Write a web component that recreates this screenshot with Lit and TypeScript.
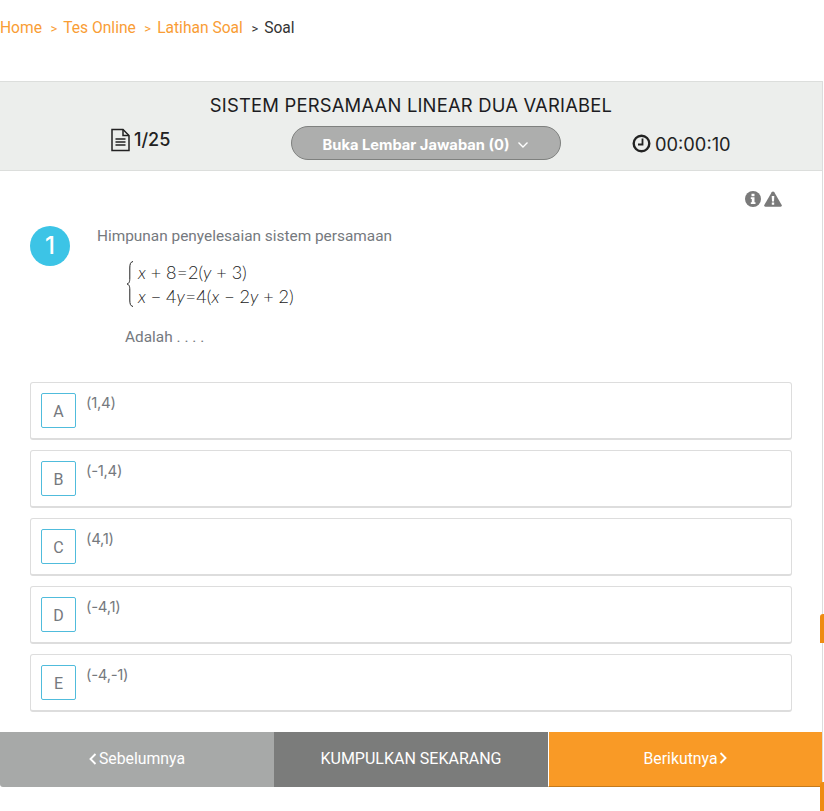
import { LitElement, html, css } from "lit";
import { customElement } from "lit/decorators.js";

const OPTIONS: [string, string][] = [
  ["A", "(1,4)"],
  ["B", "(-1,4)"],
  ["C", "(4,1)"],
  ["D", "(-4,1)"],
  ["E", "(-4,-1)"],
];

@customElement("app-root")
export class AppRoot extends LitElement {
  static styles = css`
    :host { display: block; width: 824px; height: 811px; position: relative; overflow: hidden; background: #fff; font-family: Roboto, sans-serif; }
    .crumbs { height: 81px; box-sizing: border-box; padding-top: 19px; display: flex; font-size: 15.6px; line-height: 19px; color: #f99d35; width: 822px; }
    .crumbs .sep { font-size: 13px; margin: 0 6px 0 8.5px; }
    .crumbs .cur { color: #333; }
    .page { width: 822px; border-right: 1px solid #dcdcdc; height: 730px; }
    .band { height: 90px; box-sizing: border-box; background: #eceeec; border-top: 1px solid #dcdedc; border-bottom: 1px solid #dcdedc; }
    .title { text-align: center; font-family: Inter, sans-serif; font-size: 18.4px; letter-spacing: 0.2px; line-height: 24px; padding-top: 11px; color: #1c1c22; }
    .meta { display: grid; grid-template-columns: 291px 270px 1fr; margin-top: 9px; height: 34px; }
    .count { display: flex; align-items: center; gap: 2px; padding-left: 110px; font-family: Inter, sans-serif; font-size: 18px; font-weight: 500; color: #222; height: 28px; }
    .count span { margin-top: -2px; }
    .pill { width: 270px; height: 34px; box-sizing: border-box; border: 1px solid #7f817f; border-radius: 17px; background: #adaead; color: #fff; font-family: Inter, sans-serif; font-size: 14.7px; font-weight: 700; display: flex; align-items: center; justify-content: center; gap: 8px; padding-top: 3px; }
    .time { display: flex; align-items: center; gap: 4px; padding-left: 71px; font-family: Inter, sans-serif; font-size: 18.3px; color: #222; height: 34px; }
    .time span { margin-top: 2px; }
    .tools { display: flex; justify-content: flex-end; gap: 3px; padding: 19px 40px 1px 0; height: 18px; align-items: center; }
    .q { display: grid; grid-template-columns: 40px 1fr; column-gap: 27px; padding: 11px 0 0 30px; height: 162px; }
    .num { width: 40px; height: 40px; border-radius: 50%; background: #3cc4e6; color: #fff; font-size: 24px; font-weight: 500; line-height: 40px; text-align: center; font-family: Inter, sans-serif; margin-top: 6px; }
    .qt { font-size: 15.4px; line-height: 18px; color: #75797e; padding-top: 7px; }
    .math { display: flex; margin: 15px 0 0 29px; height: 48px; font-family: Lato, sans-serif; font-size: 18px; line-height: 24px; color: #222; gap: 4px; align-items: stretch; }
    .math i { font-style: italic; font-weight: 300; }
    .math span { font-weight: 300; }
    .math .eq { margin: 0 0.5px; }
    .adalah { margin: 20px 0 0 28px; }
    .opts { display: flex; flex-direction: column; gap: 10px; margin: 0 30px; }
    .opt { height: 58px; box-sizing: border-box; border: 1px solid #dddddd; border-bottom-width: 2px; border-radius: 3px; display: flex; padding: 10px; gap: 10px; color: #75797e; }
    .key { width: 35px; height: 35px; box-sizing: border-box; border: 1px solid #50bcdc; border-radius: 2px; display: flex; align-items: center; justify-content: center; font-size: 16px; padding-top: 1px; }
    .val { font-family: Inter, sans-serif; font-size: 15px; line-height: 20px; letter-spacing: -0.3px; }
    .foot { display: grid; grid-template-columns: 274px 274px 1fr; margin-top: 20px; height: 55px; width: 822px; }
    .btn { display: flex; align-items: center; justify-content: center; gap: 2px; color: #fff; font-size: 15.8px; padding-bottom: 2px; box-sizing: border-box; }
    .prev { background: #a7a9a8; border-bottom-left-radius: 3px; }
    .mid { background: #7b7c7b; font-size: 16px; }
    .next { background: #f99a26; border-left: 1px solid #fff; border-bottom: 1px solid #c47a1c; }
    .mark { position: absolute; left: 820px; width: 4px; height: 29px; background: #ee8c12; border-radius: 3px 0 0 0; }
    .m1 { top: 614px; }
    .m2 { top: 782px; }
    svg { display: block; }
  `;

  render() {
    return html`
      <div class="crumbs">
        <span>Home</span><span class="sep">&gt;</span><span>Tes Online</span><span class="sep">&gt;</span><span>Latihan Soal</span><span class="sep cur">&gt;</span><span class="cur">Soal</span>
      </div>
      <div class="page">
        <div class="band">
          <div class="title">SISTEM PERSAMAAN LINEAR DUA VARIABEL</div>
          <div class="meta">
            <div class="count">
              <svg width="22" height="24" viewBox="0 0 22 24" fill="none" stroke="#222" stroke-width="1.5"><path d="M2 1.500h11l6 6v15H2z"/><path d="M13 1.500v6h6M5.500 11h10M5.500 14h10M5.500 17h10"/></svg>
              <span>1/25</span>
            </div>
            <div class="pill">
              <span>Buka Lembar Jawaban (0)</span>
              <svg width="12" height="8" viewBox="0 0 12 8" fill="none" stroke="#fff" stroke-width="1.4"><path d="M1.500 1.500 6 6l4.500-4.500"/></svg>
            </div>
            <div class="time">
              <svg width="19" height="19" viewBox="0 0 19 19" fill="none" stroke="#222" stroke-width="2.4"><circle cx="9.500" cy="9.500" r="7.800"/><path stroke-width="1.800" d="M10.500 4.500v6H6"/></svg>
              <span>00:00:10</span>
            </div>
          </div>
        </div>
        <div class="tools">
          <svg width="16" height="16" viewBox="0 0 16 16"><circle cx="8" cy="8" r="8" fill="#7a7a7a"/><path fill="#fff" d="M6.500 2.800h3v2.400h-3zM5.800 6.300h3.700v5h1v1.700H5.800v-1.700h1v-3.300h-1z"/></svg>
          <svg width="18" height="16" viewBox="0 0 18 16"><path fill="#7a7a7a" d="M9 .5c.6 0 1 .3 1.300.8l7.400 12.600c.5.900-.1 1.800-1.100 1.800H1.400c-1 0-1.600-.9-1.100-1.800L7.700 1.300C8 .8 8.400.5 9 .5z"/><path fill="#fff" d="M7.700 5h2.600l-.3 5.400H8zM7.800 11.600h2.400v2.200H7.800z"/></svg>
        </div>
        <div class="q">
          <div class="num">1</div>
          <div class="qt">
            <div>Himpunan penyelesaian sistem persamaan</div>
            <div class="math">
              <svg width="8" height="48" viewBox="0 0 8 48" fill="none" stroke="#222" stroke-width="1"><path d="M7 1.500C4.500 2 3.800 4 3.800 8v10c0 4-.8 5.500-2.800 6 2 .5 2.800 2 2.800 6v10c0 4 .7 6 3.200 6.500"/></svg>
              <div>
                <div><i>x</i><span> + 8</span><span class="eq">=</span><span>2(</span><i>y</i><span> + 3)</span></div>
                <div><i>x</i><span> − 4</span><i>y</i><span class="eq">=</span><span>4(</span><i>x</i><span> − 2</span><i>y</i><span> + 2)</span></div>
              </div>
            </div>
            <div class="adalah">Adalah . . . .</div>
          </div>
        </div>
        <div class="opts">
          ${OPTIONS.map(
            ([k, v]) => html`<div class="opt"><div class="key">${k}</div><div class="val">${v}</div></div>`
          )}
        </div>
        <div class="foot">
          <div class="btn prev">
            <svg width="8" height="12" viewBox="0 0 8 12" fill="none" stroke="#fff" stroke-width="1.9"><path d="M6.500 1 1.500 6l5 5"/></svg>
            <span>Sebelumnya</span>
          </div>
          <div class="btn mid">KUMPULKAN SEKARANG</div>
          <div class="btn next">
            <span>Berikutnya</span>
            <svg width="8" height="12" viewBox="0 0 8 12" fill="none" stroke="#fff" stroke-width="1.9"><path d="M1.500 1l5 5-5 5"/></svg>
          </div>
        </div>
      </div>
      <div class="mark m1"></div>
      <div class="mark m2"></div>
    `;
  }
}
